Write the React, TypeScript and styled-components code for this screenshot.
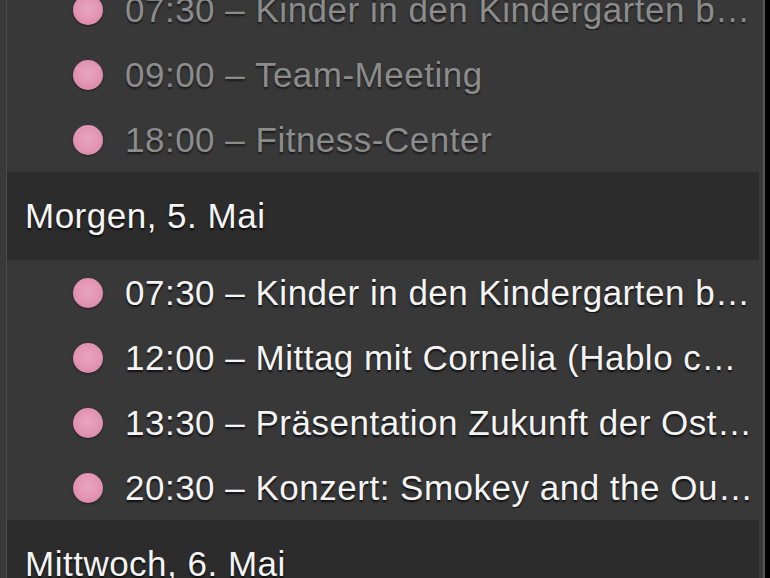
import styled, { createGlobalStyle } from "styled-components";

type Item = { time: string; title: string };
type Day = { label?: string; past?: boolean; items: Item[] };

const days: Day[] = [
  {
    past: true,
    items: [
      { time: "07:30", title: "Kinder in den Kindergarten bringen" },
      { time: "09:00", title: "Team-Meeting" },
      { time: "18:00", title: "Fitness-Center" },
    ],
  },
  {
    label: "Morgen, 5. Mai",
    items: [
      { time: "07:30", title: "Kinder in den Kindergarten bringen" },
      { time: "12:00", title: "Mittag mit Cornelia (Hablo con Cornelia)" },
      { time: "13:30", title: "Präsentation Zukunft der Ostsee" },
      { time: "20:30", title: "Konzert: Smokey and the Outlaws" },
    ],
  },
  {
    label: "Mittwoch, 6. Mai",
    items: [{ time: "09:00", title: "Team-Meeting" }],
  },
];

function App() {
  return (
    <>
      <GlobalStyle />
      <Frame>
        <Panel>
          {days.map((day, i) => (
            <Section key={i}>
              {day.label && <DayHeader>{day.label}</DayHeader>}
              {day.items.map((item, j) => (
                <EventRow key={j}>
                  <Dot />
                  <EventText $past={day.past}>
                    {item.time} – {item.title}
                  </EventText>
                </EventRow>
              ))}
            </Section>
          ))}
        </Panel>
      </Frame>
    </>
  );
}

const GlobalStyle = createGlobalStyle`
  html, body {
    margin: 0;
    padding: 0;
    background: #000;
    overflow: hidden;
  }
  body {
    font-family: "Liberation Sans", Arial, sans-serif;
  }
`;

const Frame = styled.div`
  width: 753px;
  height: 578px;
  overflow: hidden;
  background: #393939;
  padding: 0 4px 0 6px;
  border-right: 2px solid #565656;
  display: flex;
`;

const Panel = styled.div`
  flex: 1;
  min-width: 0;
  border-left: 1px solid #4a4a4a;
  background: #383838;
  margin-top: -23px;
`;

const Section = styled.div`
  display: flex;
  flex-direction: column;
`;

const DayHeader = styled.div`
  height: 88px;
  display: flex;
  align-items: center;
  padding-left: 18px;
  background: #2c2c2c;
  color: #f4f4f4;
  font-size: 35px;
  letter-spacing: 0.5px;
  text-shadow: 0 2px 2px rgba(0, 0, 0, 0.75);
`;

const EventRow = styled.div`
  height: 65px;
  display: flex;
  align-items: center;
  padding: 0 6px 0 66px;
  gap: 22px;
`;

const Dot = styled.span`
  flex: none;
  width: 30px;
  height: 30px;
  border-radius: 50%;
  background: radial-gradient(circle at 50% 45%, #eaa5bf 0%, #e194b1 55%, #cf7c9b 100%);
  box-shadow: 0 1px 2px rgba(0, 0, 0, 0.5);
`;

const EventText = styled.span<{ $past?: boolean }>`
  flex: 1;
  min-width: 0;
  font-size: 35px;
  letter-spacing: 0.5px;
  white-space: nowrap;
  overflow: hidden;
  text-overflow: ellipsis;
  color: ${(p) => (p.$past ? "#8c8c8c" : "#f4f4f4")};
  text-shadow: 0 2px 2px rgba(0, 0, 0, ${(p) => (p.$past ? 0.55 : 0.75)});
`;

export default App;
